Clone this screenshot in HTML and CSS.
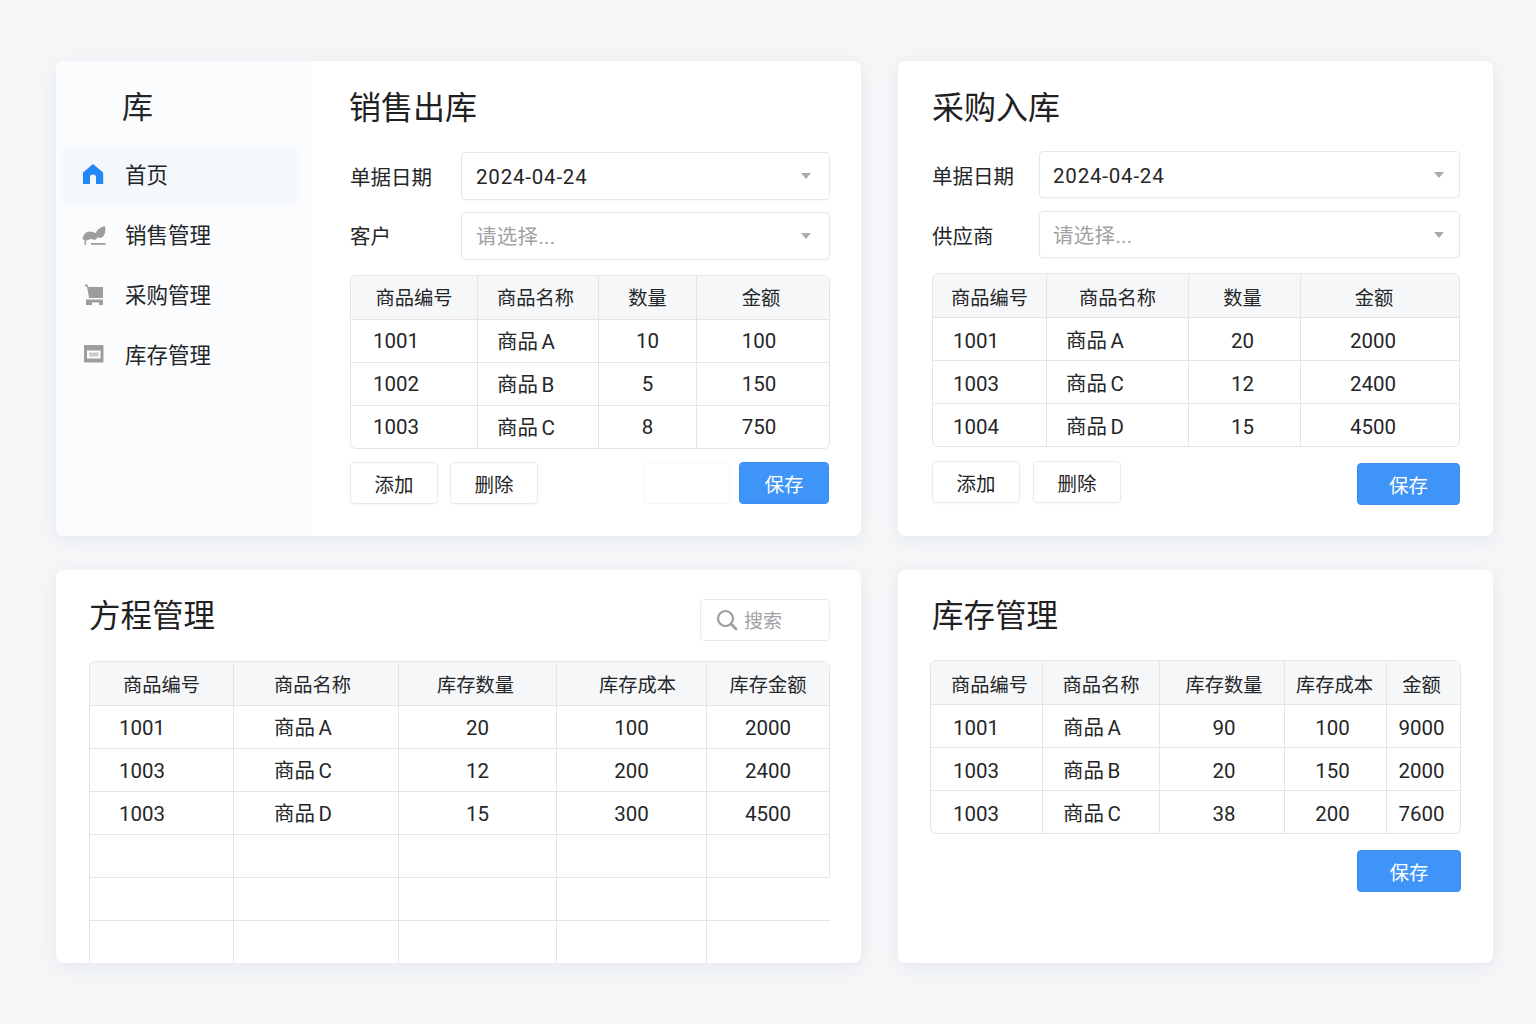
FILE: index.html
```html
<!DOCTYPE html>
<html lang="zh-CN">
<head>
<meta charset="utf-8">
<title>库存管理</title>
<link rel="stylesheet" href="styles.css">
</head>
<body>
<div class="page">
  <section class="card sales">
    <aside class="sidebar">
      <div class="brand">库</div>
      <nav class="nav">
        <a class="nav-item active">
          <svg class="icon" viewBox="0 0 24 24"><path fill="#2188f5" d="M11 1 1 9.600V21h7v-6.500a3 3 0 0 1 6 0V21h7.200V9.600Z"/></svg>
          <span>首页</span>
        </a>
        <a class="nav-item">
          <svg class="icon" viewBox="0 0 24 24"><path fill="#9b9d9f" d="M.5 16C1 11.500 4 8.500 8 8.500c2.500 0 4 1.500 7 1.500 1 3 1 5-1 6.500-1.500 1-3-.5-5-.5-1.500 0-2 1-4 1.500-1.800.3-3.500-.8-4.500-1.500Z"/><path fill="#9b9d9f" d="M14 11C14 7 18 4.500 23 3c1 4.500.3 8.500-2.500 11-2.500 2-6 .5-6.500-3ZM2.500 17H4v5H2.500ZM9 20h14.500v1.700H9Z"/></svg>
          <span>销售管理</span>
        </a>
        <a class="nav-item">
          <svg class="icon" viewBox="0 0 24 24"><path fill="#9b9d9f" d="M3 1.500h2.500l1 2.500H21v11H7L5 3.500H3ZM4 16.500h17V22h-4v-2.500h-7V22H4Z"/></svg>
          <span>采购管理</span>
        </a>
        <a class="nav-item">
          <svg class="icon" viewBox="0 0 24 24"><path fill="#9b9d9f" fill-rule="evenodd" d="M3 2h17.500a1 1 0 0 1 1 1v15.500a1 1 0 0 1-1 1H3a1 1 0 0 1-1-1V3a1 1 0 0 1 1-1Zm2 5.500V15.500h13.500V7.500Z"/><path fill="#c9cbcd" d="M7 9.500h9.500v4H7z"/></svg>
          <span>库存管理</span>
        </a>
      </nav>
    </aside>
    <div class="main">
      <h1 class="title">销售出库</h1>
      <div class="form form-wide">
        <div class="field"><label class="label">单据日期</label><div class="select"><span class="date">2024-04-24</span><i class="caret"></i></div></div>
        <div class="field"><label class="label">客户</label><div class="select placeholder"><span>请选择...</span><i class="caret"></i></div></div>
      </div>
      <div class="table-wrap">
        <table>
          <colgroup><col><col><col><col></colgroup>
          <thead><tr><th>商品编号</th><th class="left">商品名称</th><th>数量</th><th class="nudge">金额</th></tr></thead>
          <tbody>
            <tr><td class="left first">1001</td><td class="left">商品 A</td><td>10</td><td class="nudge">100</td></tr>
            <tr><td class="left first">1002</td><td class="left">商品 B</td><td>5</td><td class="nudge">150</td></tr>
            <tr><td class="left first">1003</td><td class="left">商品 C</td><td>8</td><td class="nudge">750</td></tr>
          </tbody>
        </table>
      </div>
      <div class="actions">
        <button class="btn">添加</button>
        <button class="btn">删除</button>
        <div class="ghost"></div>
        <button class="btn primary">保存</button>
      </div>
    </div>
  </section>

  <section class="card purchase">
    <div class="main">
      <h1 class="title">采购入库</h1>
      <div class="form form-narrow">
        <div class="field"><label class="label">单据日期</label><div class="select"><span class="date">2024-04-24</span><i class="caret"></i></div></div>
        <div class="field"><label class="label">供应商</label><div class="select placeholder"><span>请选择...</span><i class="caret"></i></div></div>
      </div>
      <div class="table-wrap">
        <table>
          <colgroup><col><col><col><col></colgroup>
          <thead><tr><th>商品编号</th><th>商品名称</th><th>数量</th><th>金额</th></tr></thead>
          <tbody>
            <tr><td class="left first">1001</td><td class="left">商品 A</td><td>20</td><td>2000</td></tr>
            <tr><td class="left first">1003</td><td class="left">商品 C</td><td>12</td><td>2400</td></tr>
            <tr><td class="left first">1004</td><td class="left">商品 D</td><td>15</td><td>4500</td></tr>
          </tbody>
        </table>
      </div>
      <div class="actions">
        <button class="btn">添加</button>
        <button class="btn">删除</button>
        <button class="btn primary push">保存</button>
      </div>
    </div>
  </section>

  <section class="card process">
    <div class="main">
      <div class="head">
        <h1 class="title">方程管理</h1>
        <div class="search">
          <svg class="search-icon" viewBox="0 0 22 22"><circle cx="9.500" cy="9.500" r="7.500" fill="none" stroke="#9a9da0" stroke-width="2.200"/><path d="m15 15 5 5" stroke="#9a9da0" stroke-width="2.600" stroke-linecap="round"/></svg>
          <span>搜索</span>
        </div>
      </div>
      <div class="table-wrap">
        <table>
          <colgroup><col><col><col><col><col></colgroup>
          <thead><tr><th>商品编号</th><th class="left">商品名称</th><th>库存数量</th><th class="shift">库存成本</th><th>库存金额</th></tr></thead>
          <tbody>
            <tr><td class="left first">1001</td><td class="left">商品 A</td><td>20</td><td>100</td><td>2000</td></tr>
            <tr><td class="left first">1003</td><td class="left">商品 C</td><td>12</td><td>200</td><td>2400</td></tr>
            <tr><td class="left first">1003</td><td class="left">商品 D</td><td>15</td><td>300</td><td>4500</td></tr>
            <tr><td></td><td></td><td></td><td></td><td></td></tr>
            <tr class="open"><td></td><td></td><td></td><td></td><td></td></tr>
            <tr class="open"><td></td><td></td><td></td><td></td><td></td></tr>
          </tbody>
        </table>
      </div>
    </div>
  </section>

  <section class="card stock">
    <div class="main">
      <h1 class="title">库存管理</h1>
      <div class="table-wrap">
        <table>
          <colgroup><col><col><col><col><col></colgroup>
          <thead><tr><th>商品编号</th><th>商品名称</th><th>库存数量</th><th>库存成本</th><th>金额</th></tr></thead>
          <tbody>
            <tr><td class="left first">1001</td><td class="left">商品 A</td><td>90</td><td>100</td><td>9000</td></tr>
            <tr><td class="left first">1003</td><td class="left">商品 B</td><td>20</td><td>150</td><td>2000</td></tr>
            <tr><td class="left first">1003</td><td class="left">商品 C</td><td>38</td><td>200</td><td>7600</td></tr>
          </tbody>
        </table>
      </div>
      <div class="actions">
        <button class="btn primary push">保存</button>
      </div>
    </div>
  </section>
</div>
</body>
</html>
```

FILE: styles.css
```css
* { box-sizing: border-box; }

html, body { margin: 0; height: 100%; }

body {
  background: #f4f6f8;
  color: #242628;
  font-family: "Roboto", "Noto Sans CJK SC", sans-serif;
  font-size: 20.500px;
  overflow: hidden;
}

.page {
  display: grid;
  grid-template-columns: 805px 595px;
  grid-template-rows: 475px 393px;
  column-gap: 37px;
  row-gap: 34px;
  padding: 61px 0 0 56px;
  height: 1024px;
}

.card {
  background: #fff;
  border-radius: 8px;
  box-shadow: 0 4px 18px rgba(50, 70, 80, .07);
  overflow: hidden;
  display: flex;
}

/* sidebar */
.sidebar {
  width: 256px;
  flex: none;
  background: #fbfcfe;
  padding: 26px 14px 0 6px;
}

.brand {
  font-size: 31px;
  line-height: 42px;
  padding-left: 60px;
  margin-bottom: 18px;
}

.nav { display: flex; flex-direction: column; gap: 4px; }

.nav-item {
  height: 56px;
  display: flex;
  align-items: center;
  gap: 19px;
  padding-left: 20px;
  font-size: 21.500px;
  border-radius: 6px;
}

.nav-item span { margin-top: -4px; }

.nav-item.active {
  background: #f4f8fb;
  box-shadow: 0 0 6px #f4f8fb;
}

.icon { width: 24px; height: 24px; flex: none; }

/* main column */
.main { flex: 1; min-width: 0; padding: 26px 31px 0 38px; }

.title {
  margin: 0 0 -2px;
  font-size: 32px;
  font-weight: 400;
  line-height: 42px;
  color: #1f2123;
}

.sales .title { margin-left: -1px; }

.form {
  display: flex;
  flex-direction: column;
  margin: 25px 0 15px;
}

.sales .form { gap: 12px; }

.field { display: flex; align-items: center; }

.label { flex: none; font-size: 20.500px; }

.form-wide .label { width: 111px; }
.form-narrow .label { width: 107px; }

.select {
  flex: 1;
  height: 48px;
  display: flex;
  align-items: center;
  justify-content: space-between;
  padding: 0 18px 0 14px;
  border: 1px solid #e5e7ea;
  border-radius: 4px;
  box-shadow: 0 1px 2px rgba(0, 0, 0, .03);
}

.date { margin-top: 2px; letter-spacing: .8px; }

.select.placeholder { color: #a0a2a4; }
.select.placeholder span { margin-top: -2px; letter-spacing: .3px; }

.caret {
  width: 0;
  height: 0;
  border-left: 5.500px solid transparent;
  border-right: 5.500px solid transparent;
  border-top: 6px solid #a9abad;
}

/* tables */
.table-wrap {
  border: 1px solid #e3e5e8;
  border-radius: 6px;
  overflow: hidden;
}

table {
  width: 100%;
  table-layout: fixed;
  border-collapse: separate;
  border-spacing: 0;
}

th, td {
  padding: 0;
  text-align: center;
  font-size: 20.500px;
  font-weight: 400;
  border-right: 1px solid #e3e5e8;
  border-bottom: 1px solid #e3e5e8;
}

th {
  height: 44px;
  font-size: 19.250px;
  background: #f5f7f9;
}

td { height: 43px; }

th:last-child, td:last-child { border-right: 0; }

tbody tr:last-child td { border-bottom: 0; height: 42px; }

td.left:not(.first) { word-spacing: -1.500px; }

.sales th { padding-bottom: 2px; }
.sales td.first { padding-left: 22px; }
.sales .left:not(.first) { padding-left: 19px; }
.sales td.left:not(.first) { padding-bottom: 2px; }
.sales .nudge { padding-right: 8px; }
.sales th.nudge { padding-right: 4px; }

.purchase th { padding-top: 2px; }
.purchase td.first { padding-left: 20px; }
.purchase td { padding-top: 4px; }
.purchase td.left:not(.first) { padding: 0 0 0 19px; }
.purchase th:nth-child(3), .purchase td:nth-child(3) { padding-right: 4px; }
.purchase td:nth-child(4) { padding-right: 14px; }
.purchase th:nth-child(4) { padding-right: 12px; }

.process td.first { padding-left: 29px; }
.process td { padding-top: 1px; }
.process .left:not(.first) { padding-left: 40px; }
.process td.left:not(.first) { padding-top: 0; padding-bottom: 2px; }
.process th.shift { padding-left: 12px; }
.process th:nth-child(3) { padding-right: 4px; }

.stock td.first { padding-left: 22px; }
.stock td { padding-top: 4px; }
.stock td.left:not(.first) { padding: 0 0 0 20px; }
.stock th { padding-top: 2px; }
.stock th:first-child { padding-left: 6px; }
.stock th:nth-child(3) { padding-left: 4px; }
.stock td:nth-child(3) { padding-left: 4px; }
.stock td:nth-child(4) { padding-right: 6px; }
.stock th:nth-child(4) { padding-right: 2px; }
.stock th:nth-child(5), .stock td:nth-child(5) { padding-right: 4px; }

.left { text-align: left; }

.sales col:nth-child(1) { width: 127px; }
.sales col:nth-child(2) { width: 121px; }
.sales col:nth-child(3) { width: 98px; }

.purchase col:nth-child(1) { width: 114px; }
.purchase col:nth-child(2) { width: 142px; }
.purchase col:nth-child(3) { width: 112px; }

.process col:nth-child(1) { width: 144px; }
.process col:nth-child(2) { width: 165px; }
.process col:nth-child(3) { width: 158px; }
.process col:nth-child(4) { width: 150px; }

.stock col:nth-child(1) { width: 112px; }
.stock col:nth-child(2) { width: 117px; }
.stock col:nth-child(3) { width: 125px; }
.stock col:nth-child(4) { width: 102px; }

/* actions */
.actions { display: flex; align-items: flex-start; gap: 12px; margin-top: 13px; }

.btn {
  width: 88px;
  height: 42px;
  padding: 0;
  font: inherit;
  font-size: 19.500px;
  color: #242628;
  background: #fff;
  border: 1px solid #e8eaec;
  border-radius: 4px;
  box-shadow: 0 1px 2px rgba(0, 0, 0, .04);
}

.btn.primary {
  width: 90px;
  color: #fff;
  background: #3f94f7;
  border-color: #3a8ef2;
  box-shadow: none;
}

.ghost {
  width: 86px;
  height: 42px;
  margin-left: auto;
  margin-right: -3px;
  border: 1px solid #f5f6f7;
  border-radius: 4px;
}

.sales .btn.primary { margin-right: 1px; }

/* purchase card */
.purchase .main { padding: 26px 33px 0 34px; }
.purchase .form { gap: 13px; margin: 24px 0 15px; }
.purchase .select { height: 47px; padding: 0 15px 0 13px; }
.purchase .actions { margin-top: 14px; height: 44px; gap: 13px; }
.purchase .btn.primary { width: 103px; align-self: flex-end; }
.push { margin-left: auto; }

/* process card */
.head {
  display: flex;
  justify-content: space-between;
  align-items: flex-start;
  height: 45px;
  margin-bottom: 20px;
}

.process .main { padding: 26px 31px 0 33px; }
.process .title, .stock .title { font-size: 31.500px; }

.search {
  width: 130px;
  height: 42px;
  margin-top: 3px;
  display: flex;
  align-items: center;
  gap: 6px;
  padding-left: 15px;
  color: #a0a2a4;
  font-size: 19px;
  border: 1px solid #e8eaec;
  border-radius: 4px;
}

.search span { margin-top: -2px; }

.search-icon { width: 22px; height: 22px; flex: none; }

.process .table-wrap {
  border-right: 0;
  border-bottom: 0;
  border-bottom-left-radius: 0;
  border-bottom-right-radius: 0;
}

.process tbody tr:last-child td { border-bottom: 1px solid #e3e5e8; height: 43px; }
.process tr.open td:last-child { border-right: 0; }
.process th:last-child, .process tr:not(.open) td:last-child { border-right: 1px solid #e3e5e8; }

/* stock card */
.stock .main { padding: 26px 32px 0 32px; }
.stock .title { margin: 0 0 22px 2px; }
.stock .actions { margin-top: 16px; }
.stock .btn.primary { width: 104px; }

.sales .field:nth-child(2) .label { margin-top: -3px; }
```
